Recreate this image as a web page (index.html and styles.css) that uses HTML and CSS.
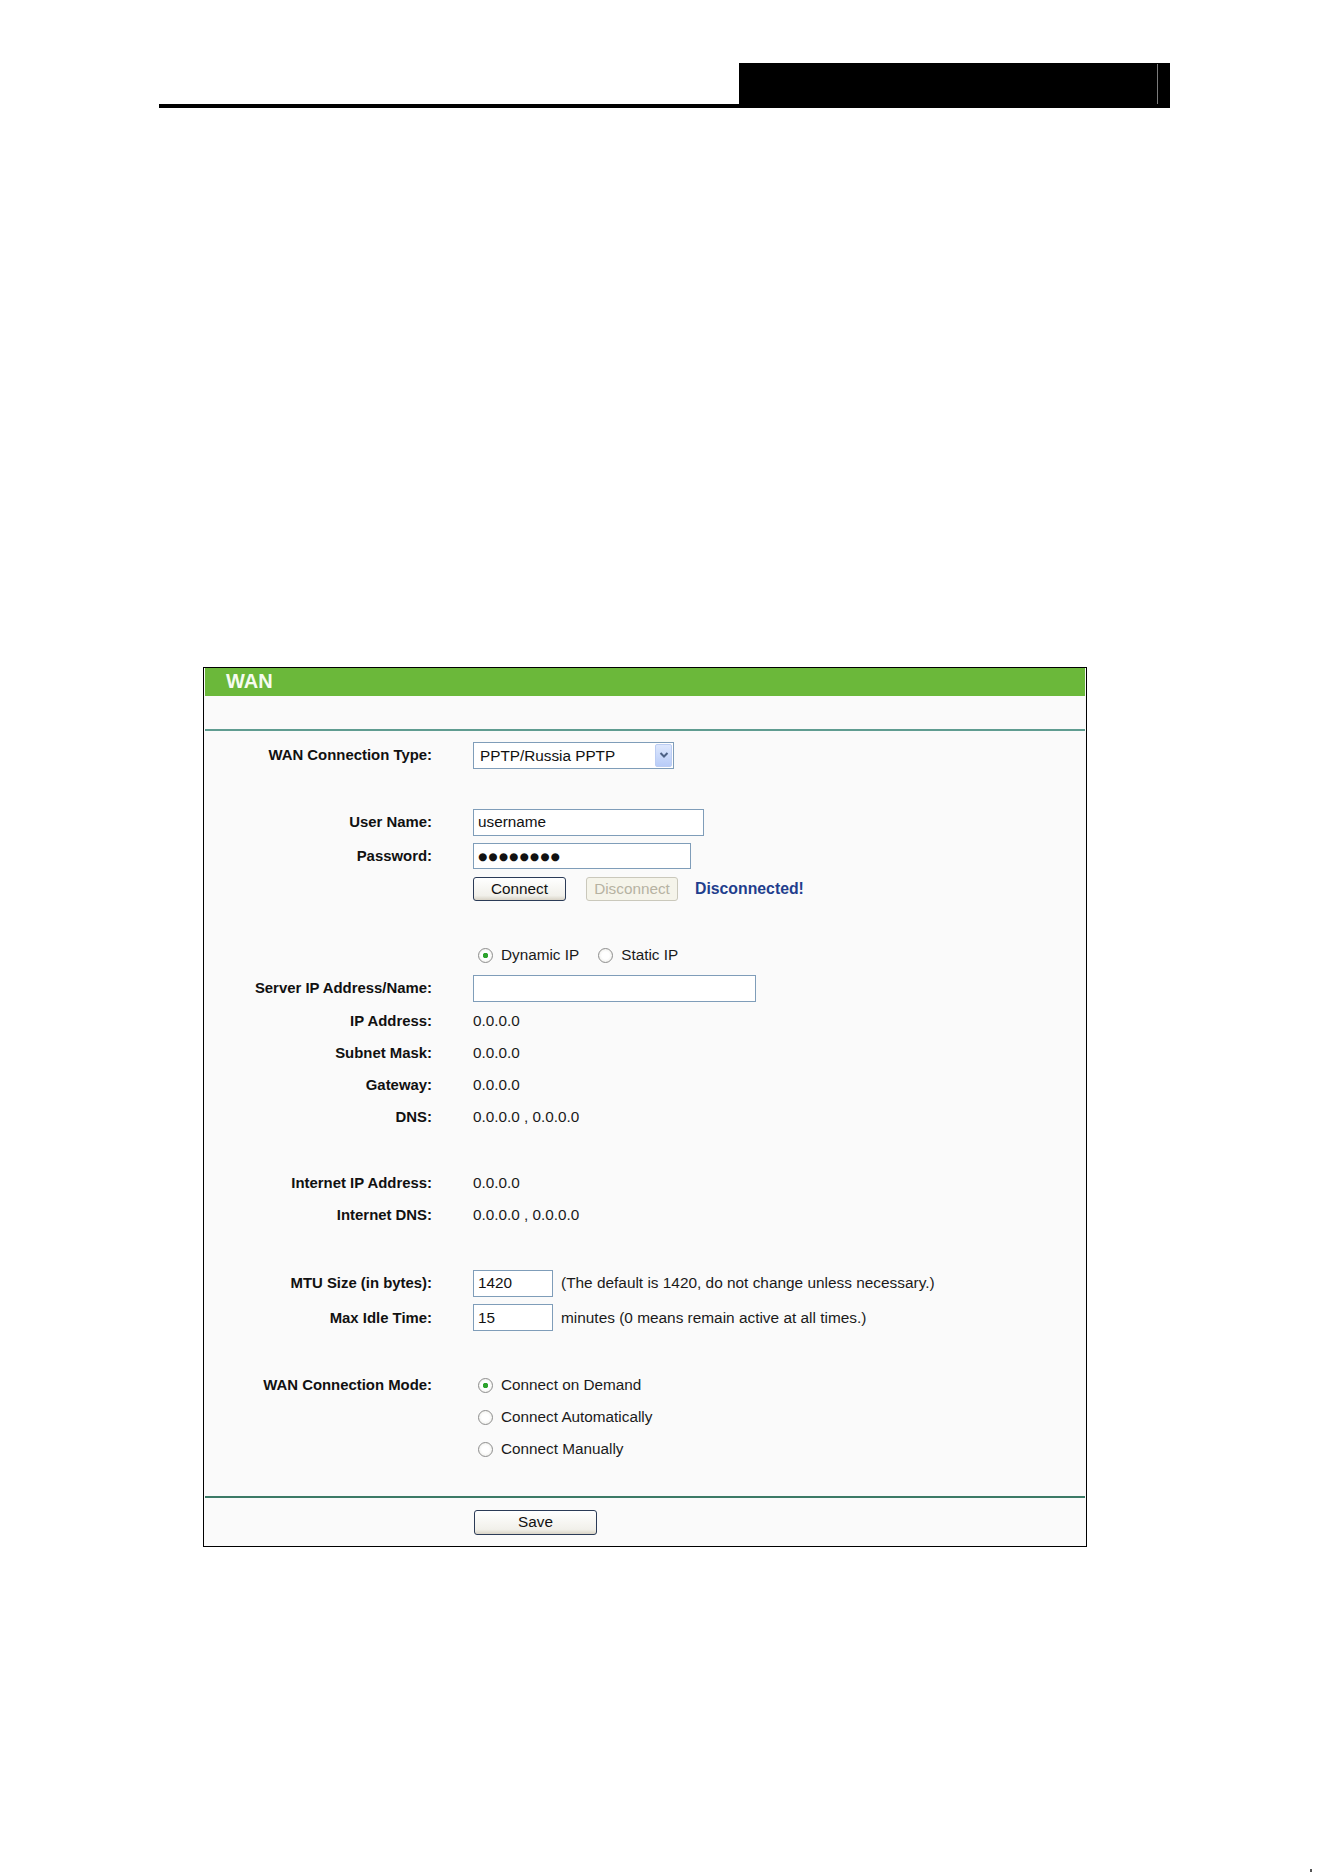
FILE: index.html
```html
<!DOCTYPE html>
<html lang="en">
<head>
    <meta charset="UTF-8">
    <meta name="viewport" content="width=device-width, initial-scale=1.0">
    <title>WAN</title>
    <link rel="stylesheet" href="styles.css">
</head>
<body>
    <div class="page">
        <!-- Cabecera de la página del manual -->
        <div class="page-header">
            <div class="header-tab"><span class="header-edge"></span></div>
        </div>

        <div class="panel">
            <div class="panel-title">WAN</div>
            <div class="panel-sub"></div>

            <form class="wan-form">
                <div class="row">
                    <label class="row-label" for="conn_type">WAN Connection Type:</label>
                    <div class="row-value">
                        <div class="select-box">
                            <select id="conn_type">
                                <option>PPTP/Russia PPTP</option>
                            </select>
                            <span class="select-arrow">
                                <svg width="10" height="8" viewBox="0 0 10 8"><path d="M1.5 2 L5 5.5 L8.5 2" fill="none" stroke="#4d6185" stroke-width="2"/></svg>
                            </span>
                        </div>
                    </div>
                </div>

                <div class="spacer"></div>

                <div class="row tall">
                    <label class="row-label" for="user_name">User Name:</label>
                    <div class="row-value">
                        <input type="text" id="user_name" class="field field-user" value="username">
                    </div>
                </div>

                <div class="row tall">
                    <label class="row-label" for="password">Password:</label>
                    <div class="row-value">
                        <input type="text" id="password" class="field field-pass" value="●●●●●●●●">
                    </div>
                </div>

                <div class="row">
                    <span class="row-label"></span>
                    <div class="row-value">
                        <button type="button" class="btn btn-connect">Connect</button>
                        <button type="button" class="btn btn-disconnect" disabled>Disconnect</button>
                        <span class="status">Disconnected!</span>
                    </div>
                </div>

                <div class="spacer"></div>

                <div class="row">
                    <span class="row-label"></span>
                    <div class="row-value">
                        <label class="radio"><input type="radio" name="ip_type" checked> Dynamic IP</label>
                        <label class="radio radio-second"><input type="radio" name="ip_type"> Static IP</label>
                    </div>
                </div>

                <div class="row tall">
                    <label class="row-label" for="server_ip">Server IP Address/Name:</label>
                    <div class="row-value">
                        <input type="text" id="server_ip" class="field field-server" value="">
                    </div>
                </div>

                <div class="row">
                    <span class="row-label">IP Address:</span>
                    <div class="row-value">0.0.0.0</div>
                </div>
                <div class="row">
                    <span class="row-label">Subnet Mask:</span>
                    <div class="row-value">0.0.0.0</div>
                </div>
                <div class="row">
                    <span class="row-label">Gateway:</span>
                    <div class="row-value">0.0.0.0</div>
                </div>
                <div class="row">
                    <span class="row-label">DNS:</span>
                    <div class="row-value">0.0.0.0 , 0.0.0.0</div>
                </div>

                <div class="spacer"></div>

                <div class="row">
                    <span class="row-label">Internet IP Address:</span>
                    <div class="row-value">0.0.0.0</div>
                </div>
                <div class="row">
                    <span class="row-label">Internet DNS:</span>
                    <div class="row-value">0.0.0.0 , 0.0.0.0</div>
                </div>

                <div class="spacer spacer-wide"></div>

                <div class="row tall">
                    <label class="row-label" for="mtu">MTU Size (in bytes):</label>
                    <div class="row-value">
                        <input type="text" id="mtu" class="field field-small" value="1420">
                        <span class="hint">(The default is 1420, do not change unless necessary.)</span>
                    </div>
                </div>

                <div class="row taller">
                    <label class="row-label" for="idle">Max Idle Time:</label>
                    <div class="row-value">
                        <input type="text" id="idle" class="field field-small" value="15">
                        <span class="hint">minutes (0 means remain active at all times.)</span>
                    </div>
                </div>

                <div class="spacer"></div>

                <div class="row">
                    <span class="row-label">WAN Connection Mode:</span>
                    <div class="row-value">
                        <label class="radio"><input type="radio" name="mode" checked> Connect on Demand</label>
                    </div>
                </div>
                <div class="row">
                    <span class="row-label"></span>
                    <div class="row-value">
                        <label class="radio"><input type="radio" name="mode"> Connect Automatically</label>
                    </div>
                </div>
                <div class="row">
                    <span class="row-label"></span>
                    <div class="row-value">
                        <label class="radio"><input type="radio" name="mode"> Connect Manually</label>
                    </div>
                </div>

                <div class="save-bar">
                    <span class="row-label"></span>
                    <div class="row-value">
                        <button type="submit" class="btn btn-save">Save</button>
                    </div>
                </div>
            </form>
        </div>

        <div class="page-footer">
            <span class="footer-rule"></span>
            <span class="footer-mark"></span>
        </div>
    </div>
</body>
</html>
```

FILE: styles.css
```css
body {
    margin: 0;
    padding: 0;
    background: #fff;
    font-family: "Liberation Sans", Arial, sans-serif;
    color: #000;
}
.page {
    padding-top: 63px;
}
.page-header {
    margin-left: 159px;
    width: 1011px;
    height: 41px;
    border-bottom: 4px solid #000;
    display: flex;
    justify-content: flex-end;
}
.header-tab {
    width: 431px;
    background-color: #000;
    display: flex;
    justify-content: flex-end;
    padding: 1px 12px 0 0;
    box-sizing: border-box;
}
.header-edge {
    width: 1px;
    background-color: #7a7a7a;
}
.panel {
    margin: 559px 0 0 203px;
    width: 884px;
    box-sizing: border-box;
    border: 1px solid #000;
    padding: 0 1px;
    background-color: #fafafa;
}
.panel-title {
    height: 28px;
    line-height: 27px;
    background-color: #6bb83a;
    color: #f6fbf0;
    font-weight: bold;
    font-size: 20px;
    padding-left: 21px;
}
.panel-sub {
    height: 33px;
    border-bottom: 2px solid #5f9c90;
}
.wan-form {
    padding-top: 8px;
}
.row, .save-bar {
    display: flex;
    align-items: center;
    gap: 41px;
    height: 32px;
}
.row.tall {
    height: 34px;
}
.row.taller {
    height: 35px;
}
.spacer {
    height: 34px;
}
.spacer-wide {
    height: 35px;
}
.row-label {
    width: 227px;
    flex-shrink: 0;
    text-align: right;
    font-weight: bold;
    font-size: 14.9px;
    color: #111;
}
.row-value {
    display: flex;
    align-items: center;
    font-size: 15.3px;
    color: #1a1a1a;
}
.select-box {
    position: relative;
    width: 201px;
    height: 27px;
}
.select-box select {
    appearance: none;
    -webkit-appearance: none;
    width: 100%;
    height: 100%;
    border: 1px solid #7f9db9;
    border-radius: 0;
    background-color: #fff;
    font-family: "Liberation Sans", Arial, sans-serif;
    font-size: 15.3px;
    color: #111;
    padding: 0 0 0 6px;
    margin: 0;
}
.select-arrow {
    position: absolute;
    top: 2px;
    right: 2px;
    bottom: 2px;
    width: 17px;
    box-sizing: border-box;
    border: 1px solid #bccdf3;
    border-radius: 2px;
    background: linear-gradient(#dde7fd, #b8ccf8);
    display: flex;
    align-items: center;
    justify-content: center;
    pointer-events: none;
}
.field {
    height: 27px;
    box-sizing: border-box;
    border: 1px solid #7f9db9;
    background-color: #fff;
    font-family: "Liberation Sans", Arial, sans-serif;
    font-size: 15.3px;
    color: #111;
    padding: 0 4px;
    margin: 0;
}
.field-user {
    width: 231px;
}
.field-pass {
    width: 218px;
    height: 26px;
    font-family: "DejaVu Sans", sans-serif;
    font-size: 10.5px;
    letter-spacing: 1.2px;
}
.field-server {
    width: 283px;
}
.field-small {
    width: 80px;
}
.hint {
    margin-left: 8px;
    font-size: 15.4px;
}
.btn {
    height: 24px;
    box-sizing: border-box;
    border: 1px solid #2b3b57;
    border-radius: 3px;
    background: linear-gradient(#ffffff, #f1f0ea 80%, #d8d3c6);
    font-family: "Liberation Sans", Arial, sans-serif;
    font-size: 15.3px;
    color: #111;
    padding: 0;
    margin: 0;
    cursor: pointer;
}
.btn-connect {
    width: 93px;
}
.btn-disconnect {
    width: 92px;
    margin-left: 20px;
    border-color: #cac8bb;
    background: #f5f4ea;
    color: #b6b2a2;
    cursor: default;
}
.status {
    margin-left: 17px;
    font-weight: bold;
    font-size: 15.8px;
    color: #1f3e8d;
}
.radio {
    display: flex;
    align-items: center;
    gap: 8px;
    margin-left: 5px;
}
.radio-second {
    margin-left: 19px;
}
.radio input {
    appearance: none;
    -webkit-appearance: none;
    width: 15px;
    height: 15px;
    margin: 0;
    border: 1px solid #8e8e8e;
    border-radius: 50%;
    background: radial-gradient(circle, #ffffff 40%, #e6e6e0);
}
.radio input:checked {
    background: radial-gradient(circle, #2ea32e 0, #2ea32e 2.5px, #ffffff 3px, #ffffff 45%, #e6e6e0);
}
.save-bar {
    height: 48px;
    margin-top: 31px;
    border-top: 2px solid #3c7a66;
}
.btn-save {
    width: 123px;
    height: 25px;
    margin-left: 1px;
}
.page-footer {
    display: flex;
    align-items: flex-end;
    margin-top: 322px;
}
.footer-rule {
    width: 880px;
    height: 2px;
    background-color: #000;
}
.footer-mark {
    width: 2px;
    height: 3px;
    margin: 0 0 2px 430px;
    background-color: #555;
}
```
